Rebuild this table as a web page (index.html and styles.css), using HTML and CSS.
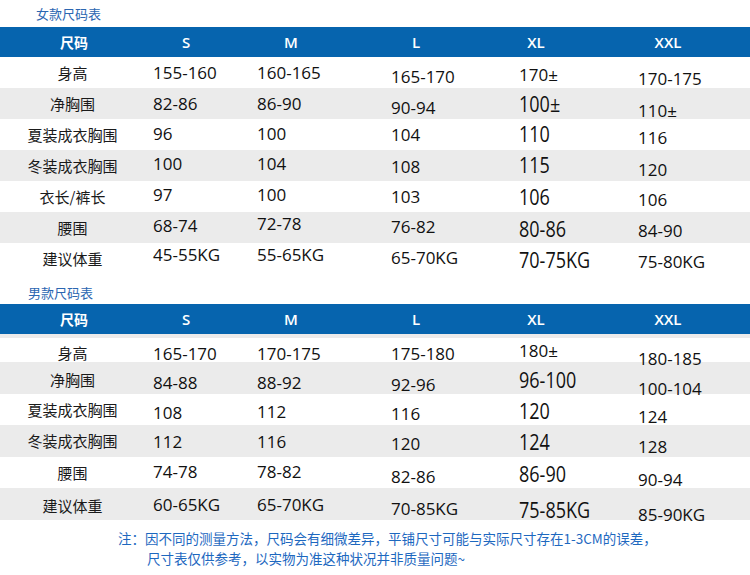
FILE: index.html
```html
<!DOCTYPE html>
<html lang="zh-CN">
<head>
<meta charset="utf-8">
<title>尺码表</title>
<link rel="stylesheet" href="styles.css">
</head>
<body>
<section class="chart chart-women">
  <h2 class="chart-title">女款尺码表</h2>
  <div class="chart-head">
    <span class="hd-label">尺码</span><span>S</span><span>M</span><span>L</span><span>XL</span><span class="hd-last">XXL</span>
  </div>
  <div class="row">
    <div class="label">身高</div>
    <div class="cell"><span>155-160</span></div>
    <div class="cell"><span>160-165</span></div>
    <div class="cell dy4"><span>165-170</span></div>
    <div class="cell dy2"><span>170±</span></div>
    <div class="cell dy6"><span>170-175</span></div>
  </div>
  <div class="row alt">
    <div class="label">净胸围</div>
    <div class="cell"><span>82-86</span></div>
    <div class="cell"><span>86-90</span></div>
    <div class="cell dy4"><span>90-94</span></div>
    <div class="cell dy1"><span class="tall">100±</span></div>
    <div class="cell dy7"><span>110±</span></div>
  </div>
  <div class="row">
    <div class="label">夏装成衣胸围</div>
    <div class="cell dym1"><span>96</span></div>
    <div class="cell dym1"><span>100</span></div>
    <div class="cell"><span>104</span></div>
    <div class="cell"><span class="tall">110</span></div>
    <div class="cell dy3"><span>116</span></div>
  </div>
  <div class="row alt">
    <div class="label">冬装成衣胸围</div>
    <div class="cell dym2"><span>100</span></div>
    <div class="cell dym2"><span>104</span></div>
    <div class="cell dy1"><span>108</span></div>
    <div class="cell"><span class="tall">115</span></div>
    <div class="cell dy4"><span>120</span></div>
  </div>
  <div class="row">
    <div class="label">衣长/裤长</div>
    <div class="cell dym2"><span>97</span></div>
    <div class="cell dym2"><span>100</span></div>
    <div class="cell"><span>103</span></div>
    <div class="cell dy1"><span class="tall">106</span></div>
    <div class="cell dy3"><span>106</span></div>
  </div>
  <div class="row alt">
    <div class="label">腰围</div>
    <div class="cell dym2"><span>68-74</span></div>
    <div class="cell dym4"><span>72-78</span></div>
    <div class="cell dym1"><span>76-82</span></div>
    <div class="cell dy2"><span class="tall">80-86</span></div>
    <div class="cell dy3"><span>84-90</span></div>
  </div>
  <div class="row">
    <div class="label">建议体重</div>
    <div class="cell dym4"><span>45-55KG</span></div>
    <div class="cell dym4"><span>55-65KG</span></div>
    <div class="cell dym1"><span>65-70KG</span></div>
    <div class="cell dy2"><span class="tall">70-75KG</span></div>
    <div class="cell dy3"><span>75-80KG</span></div>
  </div>
</section>

<section class="chart chart-men">
  <h2 class="chart-title">男款尺码表</h2>
  <div class="chart-head">
    <span class="hd-label">尺码</span><span>S</span><span>M</span><span>L</span><span>XL</span><span class="hd-last">XXL</span>
  </div>
  <div class="row row-first">
    <div class="label">身高</div>
    <div class="cell dy1"><span>165-170</span></div>
    <div class="cell dy1"><span>170-175</span></div>
    <div class="cell dy1"><span>175-180</span></div>
    <div class="cell dym2"><span>180±</span></div>
    <div class="cell dy6"><span>180-185</span></div>
  </div>
  <div class="row alt">
    <div class="label">净胸围</div>
    <div class="cell dy3"><span>84-88</span></div>
    <div class="cell dy3"><span>88-92</span></div>
    <div class="cell dy5"><span>92-96</span></div>
    <div class="cell dy1"><span class="tall">96-100</span></div>
    <div class="cell dy9"><span>100-104</span></div>
  </div>
  <div class="row">
    <div class="label">夏装成衣胸围</div>
    <div class="cell dy3"><span>108</span></div>
    <div class="cell dy2"><span>112</span></div>
    <div class="cell dy4"><span>116</span></div>
    <div class="cell dy2"><span class="tall">120</span></div>
    <div class="cell dy7"><span>124</span></div>
  </div>
  <div class="row alt">
    <div class="label">冬装成衣胸围</div>
    <div class="cell dy1"><span>112</span></div>
    <div class="cell dy1"><span>116</span></div>
    <div class="cell dy3"><span>120</span></div>
    <div class="cell dy2"><span class="tall">124</span></div>
    <div class="cell dy6"><span>128</span></div>
  </div>
  <div class="row">
    <div class="label">腰围</div>
    <div class="cell dym1"><span>74-78</span></div>
    <div class="cell dym1"><span>78-82</span></div>
    <div class="cell dy4"><span>82-86</span></div>
    <div class="cell dy2"><span class="tall">86-90</span></div>
    <div class="cell dy7"><span>90-94</span></div>
  </div>
  <div class="row alt">
    <div class="label">建议体重</div>
    <div class="cell dym1"><span>60-65KG</span></div>
    <div class="cell dym1"><span>65-70KG</span></div>
    <div class="cell dy3"><span>70-85KG</span></div>
    <div class="cell dy5"><span class="tall">75-85KG</span></div>
    <div class="cell dy9"><span>85-90KG</span></div>
  </div>
</section>

<div class="note">
  <p class="note-line">注：因不同的测量方法，尺码会有细微差异，平铺尺寸可能与实际尺寸存在1-3CM的误差，</p>
  <p class="note-line note-line-2">尺寸表仅供参考，以实物为准这种状况并非质量问题~</p>
</div>
</body>
</html>
```
FILE: styles.css
```css
* {
  box-sizing: border-box;
  margin: 0;
  padding: 0;
}

body {
  width: 750px;
  height: 575px;
  overflow: hidden;
  background: #ffffff;
  color: #111111;
  font-family: "Open Sans", "Noto Sans CJK SC", sans-serif;
}

.chart-title {
  font-family: "Noto Sans CJK SC", sans-serif;
  font-weight: 400;
  font-size: 13px;
  color: #2b66b1;
}

.chart-women .chart-title {
  height: 27px;
  line-height: 27px;
  padding-left: 36px;
}

.chart-men .chart-title {
  height: 30px;
  padding-top: 6px;
  line-height: 25px;
  padding-left: 28px;
}

.chart-head {
  display: grid;
  grid-template-columns: 148px 76px 134px 116px 124px 1fr;
  align-items: center;
  height: 30px;
  background: #0664ae;
  color: #ffffff;
  font-size: 15px;
  font-weight: 600;
  text-align: center;
}

.hd-label {
  font-family: "Noto Sans CJK SC", sans-serif;
  font-weight: 700;
  font-size: 14px;
}

.hd-last {
  padding-right: 12px;
}

.row {
  display: grid;
  grid-template-columns: 145px 104px 134px 128px 119px 1fr;
  height: 31px;
}

.chart-men .row {
  height: 31.5px;
}

.chart-men .row-first {
  height: 28px;
  border-top: 4px solid #ebebeb;
}

.row.alt {
  background: #ebebeb;
}

.label {
  display: flex;
  align-items: center;
  justify-content: center;
  font-family: "Noto Sans CJK SC", sans-serif;
  font-size: 15px;
  color: #1a1a1a;
}

.cell {
  display: flex;
  align-items: center;
  padding-left: 8px;
  font-size: 17px;
  line-height: 17px;
  white-space: nowrap;
}

.cell span {
  margin-top: calc(var(--dy, 0px) * 2);
}

.cell .tall {
  display: inline-block;
  font-size: 18px;
  transform: scaleY(1.2);
}

.dym4 { --dy: -4px; }
.dym2 { --dy: -2px; }
.dym1 { --dy: -1px; }
.dy1 { --dy: 1px; }
.dy2 { --dy: 2px; }
.dy3 { --dy: 3px; }
.dy4 { --dy: 4px; }
.dy5 { --dy: 5px; }
.dy6 { --dy: 6px; }
.dy7 { --dy: 7px; }
.dy9 { --dy: 9px; }

.note {
  padding-top: 8.5px;
  font-family: "Noto Sans CJK SC", sans-serif;
  font-size: 13.5px;
  line-height: 20px;
  color: #1d68bf;
}

.note-line {
  padding-left: 118px;
  white-space: nowrap;
}

.note-line-2 {
  padding-left: 147px;
}
```
